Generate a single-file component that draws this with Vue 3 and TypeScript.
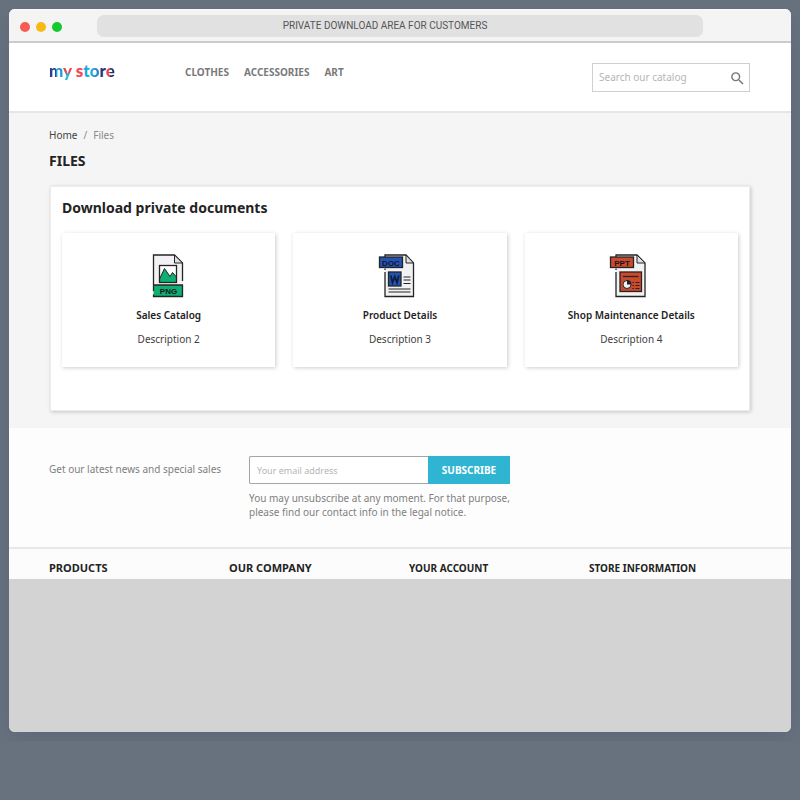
<script setup lang="ts">
import { ref } from 'vue'

interface DocumentCard {
  kind: 'png' | 'doc' | 'ppt'
  title: string
  description: string
}

const search = ref('')
const email = ref('')

const menu: string[] = ['Clothes', 'Accessories', 'Art']
const linkColumns: string[] = ['Products', 'Our company']
const infoColumns: string[] = ['Your account', 'Store information']
const documents: DocumentCard[] = [
  { kind: 'png', title: 'Sales Catalog', description: 'Description 2' },
  { kind: 'doc', title: 'Product Details', description: 'Description 3' },
  { kind: 'ppt', title: 'Shop Maintenance Details', description: 'Description 4' },
]
</script>

<template>
  <div class="browser">
    <div class="titlebar">
      <div class="lights">
        <span class="light red"></span>
        <span class="light yellow"></span>
        <span class="light green"></span>
      </div>
      <div class="address">PRIVATE DOWNLOAD AREA FOR CUSTOMERS</div>
    </div>

    <header class="header">
      <a class="logo" href="#"><span class="m">m</span><span class="y">y</span> <span class="s">s</span><span class="t">t</span><span class="o">o</span><span class="r">r</span><span class="e">e</span></a>
      <nav class="menu">
        <a v-for="item in menu" :key="item" href="#">{{ item }}</a>
      </nav>
      <form class="search" @submit.prevent>
        <input v-model="search" type="text" placeholder="Search our catalog" aria-label="Search our catalog" />
        <button type="submit" aria-label="Search">
          <svg viewBox="0 0 24 24" aria-hidden="true">
            <path d="M15.5 14h-.79l-.28-.27A6.47 6.47 0 0 0 16 9.5 6.5 6.5 0 1 0 9.5 16c1.61 0 3.09-.59 4.23-1.57l.27.28v.79l5 4.99L20.49 19l-4.99-5zm-6 0C7.01 14 5 11.99 5 9.5S7.01 5 9.5 5 14 7.01 14 9.5 11.99 14 9.5 14z" />
          </svg>
        </button>
      </form>
    </header>

    <main class="content">
      <nav class="breadcrumb" aria-label="Breadcrumb">
        <a href="#">Home</a><span>/</span><span>Files</span>
      </nav>
      <h1>Files</h1>
      <section class="panel">
        <h2>Download private documents</h2>
        <div class="cards">
          <a v-for="doc in documents" :key="doc.title" class="card" href="#">
            <svg v-if="doc.kind === 'png'" class="icon" viewBox="5 6 48 48" aria-hidden="true">
              <path d="M13.5 10H34.5L42.5 18V51.5H13.5Z" fill="#f2f2f4" />
              <path d="M13.5 40H42.5V51.5H13.5Z" fill="#0fae72" />
              <path d="M13.5 46V10H34.5L42.5 18V36M13.5 49.5V51.5H42.5V40H13.5" class="line" />
              <path d="M34.5 10V18H42.5Z" fill="#dfe0e4" class="edge" />
              <rect x="19.5" y="20.5" width="17" height="17" fill="#fff" />
              <path d="M19.5 34L24.5 23.5L30 31.5L32.5 27.5L36.5 32V37.5H19.5Z" fill="#0fae72" class="edge" />
              <rect x="19.5" y="20.5" width="17" height="17" class="line" />
              <text x="28.5" y="49" class="tag">PNG</text>
            </svg>
            <svg v-else-if="doc.kind === 'doc'" class="icon" viewBox="6 6 48 48" aria-hidden="true">
              <path d="M15 10H36L43.5 18V51.5H15Z" fill="#f2f2f4" />
              <path d="M15 23.5V25M15 27V51.5H43.5V18L36 10H15V12" class="line" />
              <path d="M36 10V18H43.5Z" fill="#dfe0e4" class="edge" />
              <rect x="9.5" y="12" width="23" height="10.5" fill="#2353b5" class="box" />
              <text x="21" y="20.5" class="tag">DOC</text>
              <rect x="18.5" y="27" width="12.5" height="14" fill="#2353b5" class="box" />
              <path d="M20.8 30.5L22.5 37.5L24.8 31.5L27 37.5L28.8 30.5" class="stroke" />
              <path d="M33.5 32H40.5M33.5 35H40.5M33.5 38.5H40.5M18.5 44H40.5M18.5 47H40.5" class="edge" />
            </svg>
            <svg v-else class="icon" viewBox="7 6 48 48" aria-hidden="true">
              <path d="M16 10H37L45 18V51.5H16Z" fill="#f2f2f4" />
              <path d="M16 23.5V25M16 27V51.5H45V18L37 10H16V12" class="line" />
              <path d="M37 10V18H45Z" fill="#dfe0e4" class="edge" />
              <rect x="10.5" y="12" width="23" height="10.5" fill="#cb4a2c" class="box" />
              <text x="22" y="20.5" class="tag">PPT</text>
              <rect x="20" y="27" width="21.5" height="19.5" fill="#cb4a2c" class="box" />
              <path d="M23 31.5H38.5" class="line" />
              <circle cx="27" cy="39.5" r="4" fill="#f2f2f4" class="edge" />
              <path d="M27 35V39.5H31.5A4.5 4.5 0 0 0 27 35Z" fill="#24201f" />
              <path d="M32.5 37.5H34M35.5 37.5H39.5M32.5 40.5H34M35.5 40.5H39.5M32.5 43.5H34M35.5 43.5H39.5" class="edge" />
            </svg>
            <strong>{{ doc.title }}</strong>
            <span>{{ doc.description }}</span>
          </a>
        </div>
      </section>
    </main>

    <section class="newsletter">
      <label for="email">Get our latest news and special sales</label>
      <form @submit.prevent>
        <div class="field">
          <input id="email" v-model="email" type="email" placeholder="Your email address" />
          <button type="submit">Subscribe</button>
        </div>
        <p>You may unsubscribe at any moment. For that purpose, please find our contact info in the legal notice.</p>
      </form>
    </section>

    <footer class="footer">
      <h3 v-for="column in linkColumns" :key="column" class="links">{{ column }}</h3>
      <h3 v-for="column in infoColumns" :key="column">{{ column }}</h3>
    </footer>
    <div class="blank"></div>
  </div>
</template>

<style>
body {
  background: #68727f;
}
</style>

<style scoped>
* {
  box-sizing: border-box;
}

.browser {
  margin: 9px;
  overflow: hidden;
  border-radius: 6px;
  background: #fff;
  box-shadow: 0 8px 24px rgba(40, 50, 65, 0.15);
  color: #232323;
  font-family: 'Noto Sans', sans-serif;
  font-size: 10px;
  line-height: 14px;
}

a {
  color: inherit;
  text-decoration: none;
}

h1,
h2,
h3,
p {
  margin: 0;
}

input,
button {
  margin: 0;
  font-family: inherit;
}

.titlebar {
  display: flex;
  align-items: center;
  height: 34px;
  padding: 1px 88px 0 11px;
  border-top: 1px solid #fafafa;
  border-bottom: 2px solid #cbcbcb;
  background: #f4f4f4;
}

.lights {
  display: flex;
  flex: 0 0 77px;
  gap: 6px;
  padding-top: 2px;
}

.light {
  width: 10px;
  height: 10px;
  border-radius: 50%;
}

.red {
  background: #f65c51;
}

.yellow {
  background: #f8b912;
}

.green {
  background: #16c92f;
}

.address {
  flex: 1;
  padding-right: 30px;
  border-radius: 7px;
  background: #e1e1e1;
  color: #555;
  font-family: Roboto, 'Liberation Sans', sans-serif;
  font-size: 10px;
  line-height: 22px;
  text-align: center;
}

.header {
  display: flex;
  align-items: center;
  height: 70px;
  padding: 0 41px 0 40px;
  border-bottom: 2px solid #e6e6e6;
}

.logo {
  flex: 0 0 136px;
  padding-bottom: 12px;
  font-family: Lato, sans-serif;
  font-size: 17px;
  font-weight: 900;
  line-height: 22px;
}

.m {
  background: linear-gradient(90deg, #263f91 50%, #1aa0dc 50%);
  background-clip: text;
  color: transparent;
}

.y {
  background: linear-gradient(180deg, #e94450 55%, #25b4df 70%);
  background-clip: text;
  color: transparent;
}

.s {
  color: #ee4a50;
}

.t {
  color: #20a9df;
}

.o {
  background: linear-gradient(90deg, #20a9df 50%, #2787cb 50%);
  background-clip: text;
  color: transparent;
}

.r {
  color: #243a7c;
}

.e {
  background: linear-gradient(90deg, #e84450 50%, #233568 50%);
  background-clip: text;
  color: transparent;
}

.menu {
  display: flex;
  flex: 1;
  gap: 15px;
  padding-bottom: 10px;
  color: #7a7a7a;
  font-weight: 700;
  text-transform: uppercase;
}

.search {
  display: flex;
  width: 158px;
  height: 29px;
  border: 1px solid #cfcfcf;
}

.search input {
  flex: 1;
  min-width: 0;
  padding: 0 0 0 6px;
  border: 0;
  background: none;
  font-size: 10px;
}

.search input::placeholder,
.field input::placeholder {
  color: #b5b5b5;
  opacity: 1;
}

.search button {
  width: 20px;
  padding: 3px 0 0;
  border: 0;
  background: none;
}

.search svg {
  display: block;
  width: 17px;
  height: 17px;
  fill: #777;
}

.content {
  padding: 15px 40px 17px;
  background: #f5f5f5;
}

.breadcrumb {
  display: flex;
  gap: 6px;
  color: #8a8a8a;
}

.breadcrumb a {
  color: #444;
}

h1 {
  margin: 9px 0 15px;
  font-size: 14px;
  line-height: 20px;
  text-transform: uppercase;
}

.panel {
  margin: 0 1px;
  padding: 11px 11px 43px;
  border: 1px solid #ececec;
  background: #fff;
  box-shadow: 1px 1px 4px rgba(0, 0, 0, 0.2);
}

h2 {
  margin-bottom: 15px;
  font-size: 14px;
  line-height: 20px;
}

.cards {
  display: grid;
  grid-template-columns: repeat(3, 1fr);
  gap: 18px;
}

.card {
  display: flex;
  flex-direction: column;
  align-items: center;
  padding: 18px 12px 21px;
  background: #fff;
  box-shadow: 1px 1px 4px rgba(0, 0, 0, 0.2);
}

.icon {
  width: 48px;
  height: 48px;
  margin-bottom: 9px;
}

.icon .line {
  fill: none;
  stroke: #242424;
  stroke-width: 1.3;
}

.icon .box {
  stroke: #242424;
  stroke-width: 1.3;
}

.icon .edge {
  stroke: #242424;
  stroke-width: 1;
}

.icon .stroke {
  fill: none;
  stroke: #101c38;
  stroke-width: 1.8;
}

.icon .tag {
  fill: #15151c;
  font-family: 'Liberation Sans', sans-serif;
  font-size: 8px;
  font-weight: 700;
  text-anchor: middle;
}

.card strong {
  margin-bottom: 10px;
  font-weight: 600;
}

.card span {
  color: #404040;
}

.newsletter {
  display: flex;
  align-items: flex-start;
  padding: 28px 40px;
  background: #fdfdfd;
  color: #808080;
}

.newsletter label {
  flex: 0 0 200px;
  padding-top: 6px;
}

.newsletter form {
  flex: 0 1 261px;
}

.field {
  display: flex;
  height: 28px;
  margin-bottom: 7px;
}

.field input {
  flex: 1;
  min-width: 0;
  padding: 0 7px;
  border: 1px solid #a5a5a5;
  border-right: 0;
  border-radius: 2px 0 0 2px;
  background: #fff;
  font-size: 9px;
}

.field button {
  width: 82px;
  padding: 0;
  border: 0;
  background: #2fb5d2;
  color: #fff;
  font-size: 10px;
  font-weight: 700;
  text-transform: uppercase;
}

.footer {
  display: grid;
  grid-template-columns: repeat(4, 1fr);
  gap: 18px;
  padding: 12px 40px 4px;
  border-top: 2px solid #e8e8e8;
  background: #fcfcfc;
}

h3 {
  font-size: 10px;
  line-height: 14px;
  text-transform: uppercase;
}

.links {
  font-size: 11px;
}

.blank {
  height: 153px;
  background: #d3d3d3;
}
</style>
